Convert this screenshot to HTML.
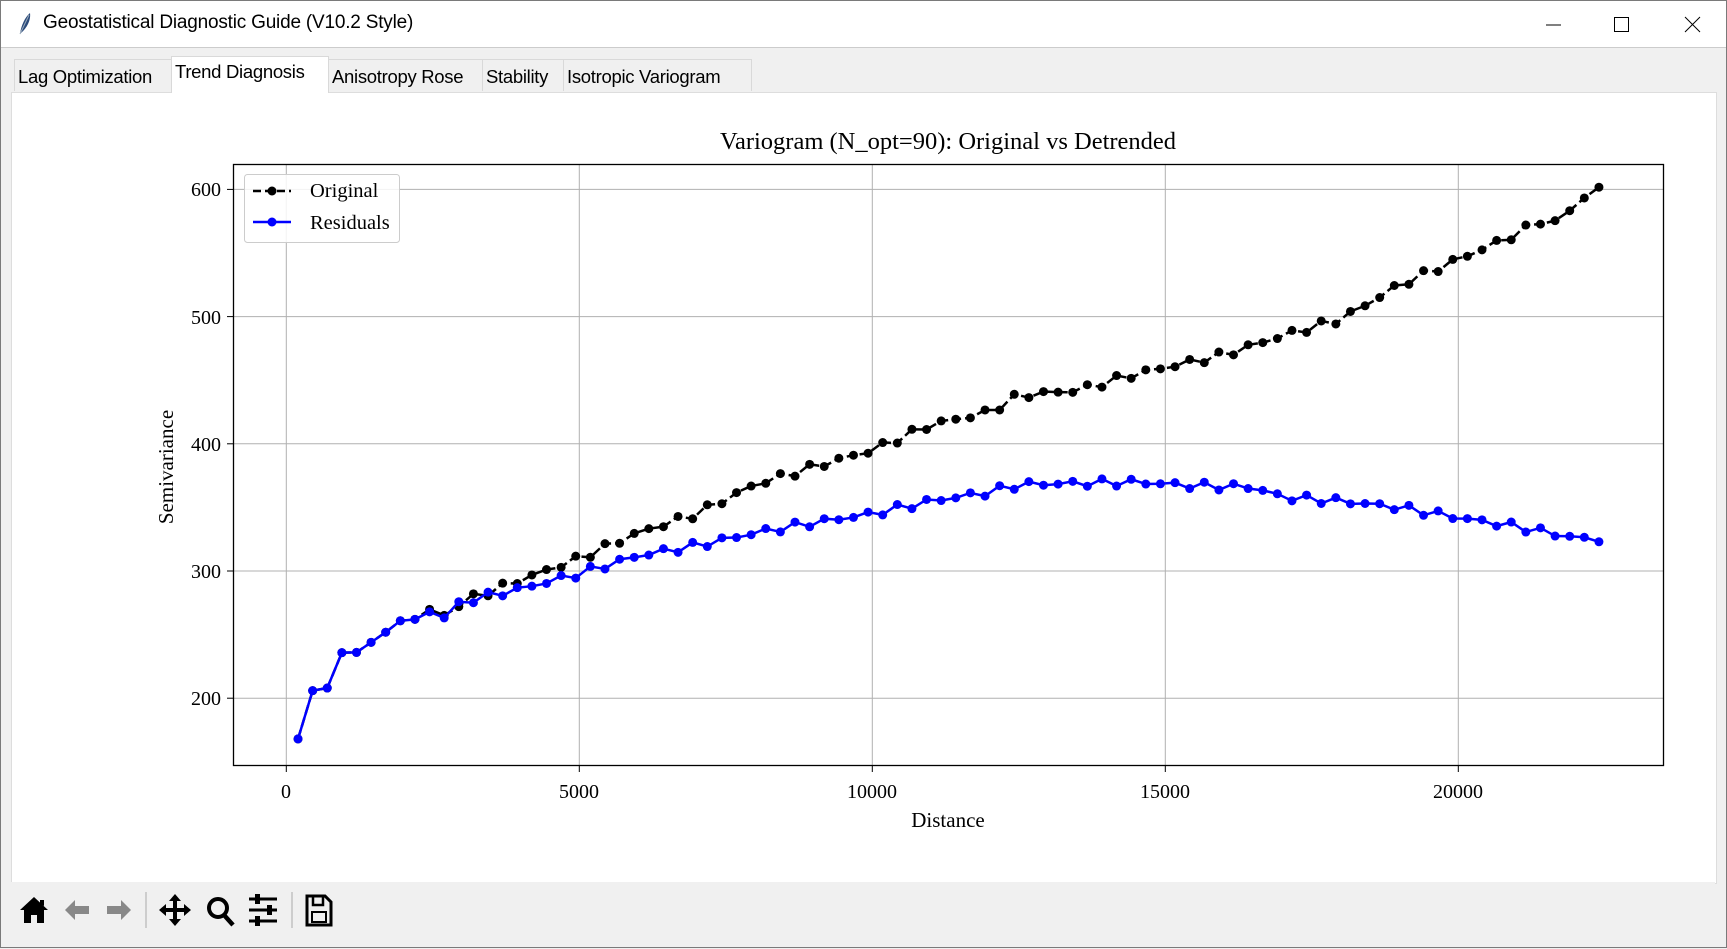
<!DOCTYPE html>
<html><head><meta charset="utf-8"><style>
body{margin:0;width:1727px;height:948px;overflow:hidden;background:#f0f0f0;font-family:"Liberation Sans",sans-serif;position:relative}
.win{position:absolute;left:0;top:0;width:1725px;height:946px;border:1px solid #7a7a7a;background:#f0f0f0}
.tb{position:absolute;left:0;top:0;width:1725px;height:46px;background:#fff;border-bottom:1px solid #ccc}
.tb .t{position:absolute;left:42px;top:11px;font-size:19px;color:#000;letter-spacing:-0.2px}
.tab{position:absolute;top:58px;height:32px;border:1px solid #d9d9d9;border-bottom:none;background:#f0f0f0;font-size:18.5px;line-height:33px;padding:0 3px;box-sizing:border-box;white-space:nowrap;letter-spacing:-0.3px}
.tab.sel{top:55px;height:37px;background:#fff;line-height:30px;z-index:2}
.content{position:absolute;left:10px;top:91px;width:1704px;height:790px;background:#fff;border:1px solid #ddd}
.toolbar{position:absolute;left:10px;top:881px;width:1704px;height:55px;background:#f0f0f0}
</style></head><body>
<div class="win">
<div class="tb">
<svg style="position:absolute;left:16px;top:11px" width="16" height="24" viewBox="0 0 16 24"><path d="M3 22 C4 14 8 5 13 1 C14 8 10 16 4 21Z" fill="#2b4a7a"/><path d="M3 22 L12 3" stroke="#9ab" stroke-width="1"/></svg>
<div class="t">Geostatistical Diagnostic Guide (V10.2 Style)</div>
<svg style="position:absolute;left:1540px;top:10px" width="180" height="26"><line x1="5" y1="14" x2="20" y2="14" stroke="#000" stroke-width="1"/><rect x="73.5" y="6.5" width="14" height="14" fill="none" stroke="#000"/><path d="M144 6 L159 21 M159 6 L144 21" stroke="#000" stroke-width="1"/></svg>
</div>
<div class="tab" style="left:13px;width:158px">Lag Optimization</div>
<div class="tab sel" style="left:170px;width:158px">Trend Diagnosis</div>
<div class="tab" style="left:327px;width:155px">Anisotropy Rose</div>
<div class="tab" style="left:481px;width:82px">Stability</div>
<div class="tab" style="left:562px;width:189px">Isotropic Variogram</div>
<div class="content"></div>
<svg id="plot" style="position:absolute;left:0;top:0" width="1727" height="948" font-family="Liberation Serif, serif">
<g id="grid" stroke="#b0b0b0" stroke-width="1"></g>
<g id="data"></g>
<rect x="232.5" y="163.5" width="1430" height="601" fill="none" stroke="#000" stroke-width="1.3"/>
<text x="947" y="148" font-size="24.5" text-anchor="middle">Variogram (N_opt=90): Original vs Detrended</text>
<g font-size="20" text-anchor="end">
<text x="220" y="195">600</text><text x="220" y="323">500</text><text x="220" y="450">400</text><text x="220" y="577">300</text><text x="220" y="704">200</text></g>
<g font-size="20" text-anchor="middle">
<text x="285" y="797">0</text><text x="578" y="797">5000</text><text x="871" y="797">10000</text><text x="1164" y="797">15000</text><text x="1457" y="797">20000</text></g>
<text x="947" y="826" font-size="21" text-anchor="middle">Distance</text>
<text transform="translate(172,466) rotate(-90)" font-size="21" text-anchor="middle">Semivariance</text>
<rect x="243.5" y="173.5" width="155" height="68" rx="3" fill="#fff" fill-opacity="0.85" stroke="#ccc"/>
<line x1="252" y1="190" x2="290" y2="190" stroke="#000" stroke-width="2.5" stroke-dasharray="8,4"/><circle cx="271" cy="190" r="4.5"/>
<line x1="252" y1="221" x2="290" y2="221" stroke="#00f" stroke-width="2.5"/><circle cx="271" cy="221" r="4.5" fill="#00f"/>
<text x="309" y="196" font-size="20.5">Original</text><text x="309" y="228" font-size="20.5">Residuals</text>
</svg>
<div class="toolbar">
<svg width="360" height="55" style="position:absolute;left:0;top:-1px">
<path transform="translate(-11,0)" d="M20 29 L34 16 L48 29 L44 29 L44 42 L37 42 L37 34 L31 34 L31 42 L24 42 L24 29Z M40 19 L44 19 L44 25 L40 22Z" fill="#000"/>
<g transform="translate(-8,0)">
<path d="M62 29 L72 19 L72 25 L86 25 L86 33 L72 33 L72 39Z" fill="#888"/>
<path d="M128 29 L118 19 L118 25 L104 25 L104 33 L118 33 L118 39Z" fill="#888"/>
</g>
<line x1="135" y1="11" x2="135" y2="47" stroke="#aaa"/>
<path d="M164 13 L170 20 L166 20 L166 27 L173 27 L173 23 L180 29 L173 35 L173 31 L166 31 L166 38 L170 38 L164 45 L158 38 L162 38 L162 31 L155 31 L155 35 L148 29 L155 23 L155 27 L162 27 L162 20 L158 20Z" fill="#000"/>
<circle cx="207" cy="27" r="9" fill="none" stroke="#000" stroke-width="4"/><line x1="213" y1="34" x2="222" y2="44" stroke="#000" stroke-width="4.5"/>
<g stroke="#000" stroke-width="3"><line x1="238" y1="18" x2="266" y2="18"/><line x1="238" y1="29" x2="266" y2="29"/><line x1="238" y1="40" x2="266" y2="40"/></g>
<g fill="#000"><rect x="244" y="13" width="5" height="10"/><rect x="256" y="24" width="5" height="10"/><rect x="244" y="35" width="5" height="10"/></g>
<line x1="281" y1="11" x2="281" y2="47" stroke="#aaa"/>
<path d="M296 15 L314 15 L320 21 L320 44 L296 44Z" fill="none" stroke="#000" stroke-width="3"/><rect x="302" y="15" width="10" height="9" fill="none" stroke="#000" stroke-width="2.5"/><rect x="301" y="31" width="14" height="10" fill="none" stroke="#000" stroke-width="2"/>
</svg>
</div>
</div>
<script>
var X=function(v){return 285.3+v*293/5000},Y=function(v){return 697.2-(v-200)*1.272};
var g=document.getElementById('grid'),s='';
[0,5000,10000,15000,20000].forEach(function(v){s+='<line x1="'+X(v)+'" y1="164" x2="'+X(v)+'" y2="764"/><line x1="'+X(v)+'" y1="765" x2="'+X(v)+'" y2="771" stroke="#000"/>';});
[200,300,400,500,600].forEach(function(v){s+='<line x1="233" y1="'+Y(v)+'" x2="1662" y2="'+Y(v)+'"/><line x1="226" y1="'+Y(v)+'" x2="232" y2="'+Y(v)+'" stroke="#000"/>';});
g.innerHTML=s;
var O=[[200,168],[450,206],[700,208],[950,236],[1200,236],[1450,244],[1700,252],[1950,261],[2200,262],[2450,270],[2700,265],[3000,276],[4000,293],[5000,310],[6000,330],[7000,345],[8000,368],[9000,382],[10000,395],[11000,415],[12000,425],[12500,438],[13500,442],[14500,455],[15000,460],[16000,470],[17000,485],[18000,498],[19000,525],[20000,545],[21000,565],[21500,578],[21700,572],[22000,590],[22400,600]];
var R=[[200,168],[450,206],[700,208],[950,236],[1200,236],[1450,244],[1700,252],[1950,261],[2200,262],[2450,268],[2700,263],[3000,276],[4000,286],[5000,298],[6000,312],[7000,320],[8000,330],[9000,338],[10000,345],[11000,355],[12000,362],[12500,368],[14500,370],[15500,367],[16500,366],[17000,358],[18000,355],[19000,350],[20000,342],[21000,335],[22000,326],[22400,325]];
function f(a,x){for(var i=0;i<a.length-1;i++)if(x<=a[i+1][0]){var t=(x-a[i][0])/(a[i+1][0]-a[i][0]);return a[i][1]+t*(a[i+1][1]-a[i][1]);}return a[a.length-1][1];}
function pts(a,seed){var r=[];for(var i=0;i<90;i++){var x=200+i*(22200/89),v=f(a,x);if(x>2800)v+=3*Math.sin(i*2.7+seed);r.push([X(x),Y(v)]);}return r;}
var po=pts(O,1),pr=pts(R,4),h='';
h+='<polyline fill="none" stroke="#000" stroke-width="2.5" stroke-dasharray="9,4" points="'+po.join(' ')+'"/>';
po.forEach(function(p){h+='<circle cx="'+p[0]+'" cy="'+p[1]+'" r="4.5"/>';});
h+='<polyline fill="none" stroke="#00f" stroke-width="2.5" points="'+pr.join(' ')+'"/>';
pr.forEach(function(p){h+='<circle cx="'+p[0]+'" cy="'+p[1]+'" r="4.5" fill="#00f"/>';});
document.getElementById('data').innerHTML=h;
</script>
</body></html>
